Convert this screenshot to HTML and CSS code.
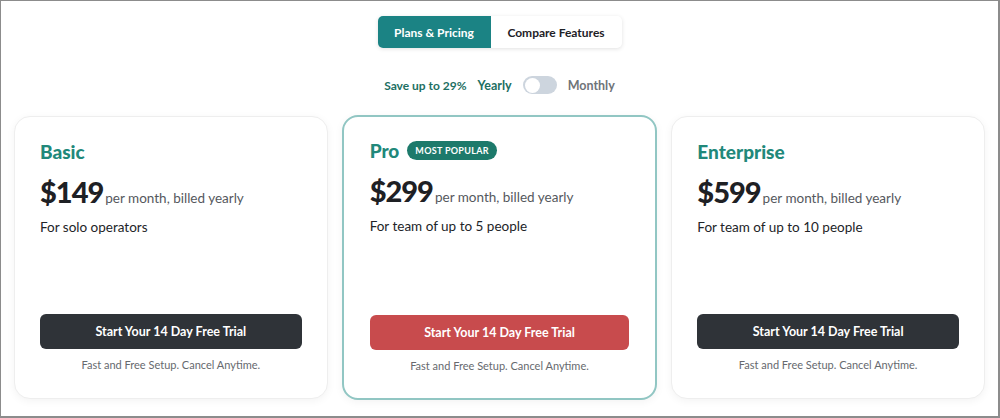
FILE: index.html
```html
<!DOCTYPE html>
<html>
    <head>
        <meta charset="UTF-8" name="viewport" content="width=device-width, initial-scale=1.0">
        <title>Plans &amp; Pricing</title>
        <link rel="stylesheet" href="styles.css">
    </head>
    <body>
        <div class="frame">

            <div class="tabs">
                <button class="tab tab-active">Plans &amp; Pricing</button>
                <button class="tab">Compare Features</button>
            </div>

            <div class="billing">
                <span class="save">Save up to 29%</span>
                <span class="period period-on">Yearly</span>
                <span class="switch"><span class="knob"></span></span>
                <span class="period">Monthly</span>
            </div>

            <div class="plans">
                <div class="card">
                    <div class="plan-name">Basic</div>
                    <div class="price"><span class="amount">$149</span><span class="per">per month, billed yearly</span></div>
                    <div class="desc">For solo operators</div>
                    <button class="btn-trial">Start Your 14 Day Free Trial</button>
                    <div class="note">Fast and Free Setup. Cancel Anytime.</div>
                </div>

                <div class="card card-pro">
                    <div class="plan-name">Pro <span class="badge">MOST POPULAR</span></div>
                    <div class="price"><span class="amount">$299</span><span class="per">per month, billed yearly</span></div>
                    <div class="desc">For team of up to 5 people</div>
                    <button class="btn-trial btn-red">Start Your 14 Day Free Trial</button>
                    <div class="note">Fast and Free Setup. Cancel Anytime.</div>
                </div>

                <div class="card">
                    <div class="plan-name">Enterprise</div>
                    <div class="price"><span class="amount">$599</span><span class="per">per month, billed yearly</span></div>
                    <div class="desc">For team of up to 10 people</div>
                    <button class="btn-trial">Start Your 14 Day Free Trial</button>
                    <div class="note">Fast and Free Setup. Cancel Anytime.</div>
                </div>
            </div>

        </div>
    </body>
</html>
```

FILE: styles.css
```css
/* base */
body {
    margin: 0;
    font-family: Lato, "Noto Sans", sans-serif;
    background-color: #ffffff;
    color: #222428;
}

.frame {
    box-sizing: border-box;
    height: 418px;
    border-style: solid;
    border-color: #8c8c8c;
    border-width: 1px 2px 2px 1px;
    padding: 15px 13px 0 13px;
}

/* top tabs */
.tabs {
    display: flex;
    width: 244px;
    margin: 0 auto;
    border-radius: 5px;
    box-shadow: 0 1px 4px rgba(0, 0, 0, 0.12);
    background-color: #fff;
}

.tab {
    height: 32px;
    border: none;
    background: none;
    font-family: inherit;
    font-size: 12px;
    font-weight: 700;
    color: #1e2126;
    cursor: pointer;
    padding: 0;
    width: 131px;
}

.tab-active {
    width: 113px;
    background-color: #1b8384;
    color: #fff;
    border-radius: 5px 0 0 5px;
}

/* yearly / monthly */
.billing {
    display: flex;
    justify-content: center;
    align-items: center;
    gap: 11px;
    margin-top: 27px;
    height: 20px;
    font-size: 12px;
}

.save {
    font-weight: 700;
    color: #1d6f62;
}

.period {
    font-weight: 700;
    color: #6f7479;
    font-size: 12.5px;
}

.period-on {
    color: #1d6f62;
}

.switch {
    display: flex;
    align-items: center;
    width: 34px;
    height: 18px;
    border-radius: 9px;
    background-color: #cdd5de;
    padding: 0 2px;
    box-sizing: border-box;
}

.knob {
    width: 15px;
    height: 15px;
    border-radius: 50%;
    background-color: #fff;
}

/* cards */
.plans {
    display: grid;
    grid-template-columns: repeat(3, 1fr);
    gap: 15px;
    margin-top: 21px;
}

.card {
    display: flex;
    flex-direction: column;
    height: 283px;
    box-sizing: border-box;
    padding: 23px 25px 27px 25px;
    border: 1px solid #eeeeee;
    border-radius: 16px;
    box-shadow: 0 2px 8px rgba(0, 0, 0, 0.05);
    background-color: #fff;
}

.card-pro {
    border: 2px solid #91c6c3;
    height: 285px;
    margin: -1px -1px 0 -1px;
    padding: 22px 26px 26px 26px;
}

.plan-name {
    display: flex;
    align-items: center;
    gap: 8px;
    height: 22px;
    font-size: 19px;
    font-weight: 900;
    color: #21887a;
}

.badge {
    background-color: #1d7a6b;
    color: #fff;
    font-size: 9px;
    font-weight: 700;
    letter-spacing: 0.3px;
    padding: 4px 8px;
    border-radius: 10px;
}

.price {
    display: flex;
    align-items: baseline;
    margin-top: 12px;
}

.amount {
    font-size: 29px;
    font-weight: 900;
    color: #1e2024;
    letter-spacing: -1px;
}

.per {
    font-size: 13.5px;
    color: #55585d;
    margin-left: 2px;
}

.desc {
    font-size: 13.5px;
    color: #222428;
    margin-top: 10px;
}

.btn-trial {
    margin-top: auto;
    height: 35px;
    border: none;
    border-radius: 6px;
    background-color: #2f3338;
    color: #fff;
    font-family: inherit;
    font-size: 12.5px;
    font-weight: 700;
    cursor: pointer;
}

.btn-red {
    background-color: #c84b4d;
}

.note {
    text-align: center;
    font-size: 11px;
    color: #66696e;
    margin-top: 9px;
}
```
